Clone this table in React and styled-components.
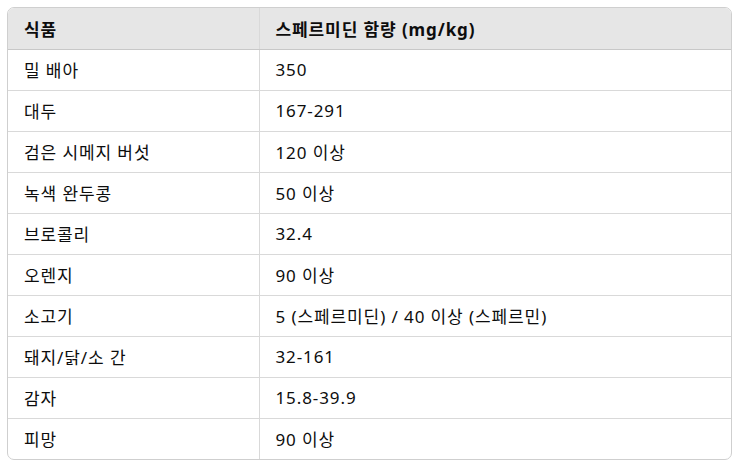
import styled, { createGlobalStyle } from 'styled-components';

const GlobalStyle = createGlobalStyle`
	body {
		margin: 7px;
		background: #fff;
		font-family: "Noto Sans", "Noto Sans CJK KR", sans-serif;
		color: #0d0d0d;
	}
`;

const Wrapper = styled('div')`
	width: 725px;
	border: 1px solid #cfcfcf;
	border-radius: 7px;
	overflow: hidden;
	box-sizing: border-box;
`;

const Table = styled('table')`
	width: 100%;
	border-collapse: collapse;
	table-layout: fixed;
	font-size: 17px;
	letter-spacing: 0.9px;
`;

const Cell = styled('td')`
	height: 41px;
	padding: 0 16px;
	box-sizing: border-box;
	text-align: left;
	vertical-align: middle;
	border-top: ${({ $first }) => ($first ? 'none' : '1px solid #d9d9d9')};
	border-left: ${({ $col }) => ($col === 0 ? 'none' : '1px solid #d9d9d9')};
	white-space: nowrap;
`;

const Head = styled(Cell).attrs({ as: 'th' })`
	background: #e6e6e6;
	font-weight: 700;
	border-bottom: 1px solid #c8c8c8;
`;

const rows = [
	['밀 배아', '350'],
	['대두', '167-291'],
	['검은 시메지 버섯', '120 이상'],
	['녹색 완두콩', '50 이상'],
	['브로콜리', '32.4'],
	['오렌지', '90 이상'],
	['소고기', '5 (스페르미딘) / 40 이상 (스페르민)'],
	['돼지/닭/소 간', '32-161'],
	['감자', '15.8-39.9'],
	['피망', '90 이상'],
];

const App = () => {
	return (
		<>
			<GlobalStyle />
			<Wrapper>
				<Table>
					<colgroup>
						<col style={{ width: '251px' }} />
						<col />
					</colgroup>
					<thead>
						<tr>
							<Head $first $col={0}>식품</Head>
							<Head $first $col={1}>스페르미딘 함량 (mg/kg)</Head>
						</tr>
					</thead>
					<tbody>
						{rows.map(([food, amount], i) => (
							<tr key={food}>
								<Cell $first={i === 0} $col={0}>{food}</Cell>
								<Cell $first={i === 0} $col={1}>{amount}</Cell>
							</tr>
						))}
					</tbody>
				</Table>
			</Wrapper>
		</>
	);
};

export default App;
